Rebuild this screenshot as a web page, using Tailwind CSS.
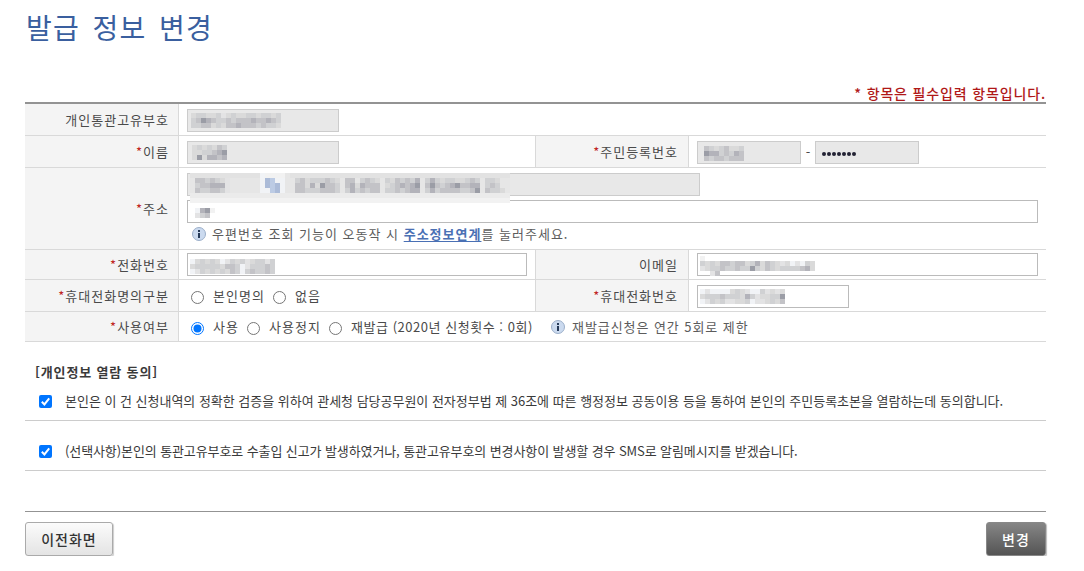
<!DOCTYPE html>
<html lang="ko">
<head>
  <meta charset="UTF-8" />
  <meta name="viewport" content="width=device-width, initial-scale=1.0"/>
  <title>발급 정보 변경</title>
  <script src="https://cdn.jsdelivr.net/npm/@tailwindcss/browser@4"></script>
</head>
<body class="bg-white text-[#4a4a4a] font-['Noto_Sans_CJK_KR',sans-serif]">
  <div class="w-[1021px] ml-[25px]">
    <header class="h-[102px] flex flex-col justify-between">
      <h1 class="mt-[7px] pl-px leading-[40px] text-[28px] tracking-[1.2px] [word-spacing:3.5px] text-[#3a5f9f] whitespace-nowrap">발급 정보 변경</h1>
      <p class="-mb-px text-right leading-[20px] text-[14px] font-medium tracking-[0.85px] text-[#b01818]">* 항목은 필수입력 항목입니다.</p>
    </header>

    <main>
      <!-- form rows -->
      <div class="border-t-2 border-[#939393] text-[13px] leading-[18px] tracking-[1px]">
        <div class="flex h-8 border-b border-[#d9d9d9]">
          <div class="w-[154px] flex items-center justify-end pr-[9px] bg-[#f4f4f4] border-r border-[#d9d9d9]">개인통관고유부호</div>
          <div class="flex-1 flex items-center pl-2 pt-px">
            <div class="relative w-[152px] h-[23px] bg-[#e8e8e8] border border-[#ccc]">
              <svg class="mosaic absolute left-[3px] top-[3px]" data-rows="eddeedfedeeddedded|dcabcddcdcccbccbcd|ddccedeccbcccdcdde"></svg>
            </div>
          </div>
        </div>

        <div class="flex h-8 border-b border-[#d9d9d9]">
          <div class="w-[154px] flex items-center justify-end pr-[9px] bg-[#f4f4f4] border-r border-[#d9d9d9]"><span class="text-[#c01f1f]">*</span>이름</div>
          <div class="w-[356px] flex items-center pl-2 pt-px">
            <div class="relative w-[152px] h-[23px] bg-[#e8e8e8] border border-[#ccc]">
              <svg class="mosaic absolute left-1 top-[3px]" data-rows="ededecd|eeddcba|eaebbcb"></svg>
            </div>
          </div>
          <div class="w-[154px] flex items-center justify-end pr-[10px] bg-[#f4f4f4] border-x border-[#d9d9d9]"><span class="text-[#c01f1f]">*</span>주민등록번호</div>
          <div class="flex-1 flex items-center pl-2 pt-px">
            <div class="relative w-[104px] h-[23px] bg-[#e8e8e8] border border-[#ccc]">
              <svg class="mosaic absolute left-[6px] top-[4px]" data-rows="cdedceed|abbdcdbc|cdccdccc"></svg>
            </div>
            <span class="w-[14px] text-center pl-px">-</span>
            <div class="w-[104px] h-[23px] flex items-center gap-px pl-[6px] pt-1 bg-[#e8e8e8] border border-[#ccc]">
              <i class="size-1 rounded-full bg-[#222233]"></i><i class="size-1 rounded-full bg-[#222233]"></i><i class="size-1 rounded-full bg-[#222233]"></i><i class="size-1 rounded-full bg-[#222233]"></i><i class="size-1 rounded-full bg-[#222233]"></i><i class="size-1 rounded-full bg-[#222233]"></i><i class="size-1 rounded-full bg-[#222233]"></i>
            </div>
          </div>
        </div>

        <div class="flex h-[82px] border-b border-[#d9d9d9]">
          <div class="w-[154px] flex items-center justify-end pr-[9px] bg-[#f4f4f4] border-r border-[#d9d9d9]"><span class="text-[#c01f1f]">*</span>주소</div>
          <div class="flex-1 flex flex-col pl-2 pt-[5px]">
            <div class="relative z-10 w-[513px] h-[23px] bg-[#e8e8e8] border border-[#ccc]">
              <svg class="mosaic absolute left-[2px] -top-px" data-rows="hhhhhhhhhhhhhhwkkkkghhhhhhhhhhhhhhhhhhhhhhhhhhhhhhhhhhhhhhhhhhhh|gccdcdefggggggw12wwggdcedddcdegccgdcdegdecdcdbgdbdeddeedcdgddegg|gdccbbbfggggggw121wggccebeaccdgcbebcccgedcbcbagcacdcbaccbbgdcdggg|gcddccdfggggggww21wggccdddcccdgdbdcdccgddcdcbbgdbdccccddcagcddegg|jjjjjjjjjjjjjjjjjjjjjjjjjjjjjjjjjjjjjjjjjjjjjjjjjjjjjjjjjjjjjjjj|kkkkkkkkkkkkkkkkkkkkkkkkkkkkkkkkkkkkkkkkkkkkkkkkkkkkkkkkkkkkkkkk"></svg>
            </div>
            <div class="relative mt-1 w-[851px] h-[23px] border border-[#bbb]">
              <svg class="mosaic absolute left-[2px] top-[7px]" data-rows=".wbak|.fdc."></svg>
            </div>
            <div class="flex items-center mt-[3px] pl-[5px] text-[#5c5c5c]">
              <svg class="w-[14px] h-[14px] mr-[6px] -mt-px" viewBox="0 0 14 14"><circle cx="7" cy="7" r="6.5" fill="#cbdaef" stroke="#9cafc9"/><path d="M6 3h2v2H6zM6 6h2v5H6z" fill="#263a58"/></svg>
              <span class="-mt-px">우편번호 조회 기능이 오동작 시 <a class="font-bold text-[#4a70b4] underline underline-offset-2">주소정보연계</a>를 눌러주세요.</span>
            </div>
          </div>
        </div>

        <div class="flex h-[30px] border-b border-[#d9d9d9]">
          <div class="w-[154px] flex items-center justify-end pr-[9px] bg-[#f4f4f4] border-r border-[#d9d9d9]"><span class="text-[#c01f1f]">*</span>전화번호</div>
          <div class="w-[356px] flex items-center pl-2">
            <div class="relative w-[340px] h-[23px] border border-[#bbb]">
              <svg class="mosaic absolute left-[2px] top-[5px]" data-rows="wededewfdedfeddfd.|edddddeccdwfdddcd.|wfdededecdwdcddcd."></svg>
            </div>
          </div>
          <div class="w-[154px] flex items-center justify-end pr-[10px] bg-[#f4f4f4] border-x border-[#d9d9d9]">이메일</div>
          <div class="flex-1 flex items-center pl-2">
            <div class="relative w-[341px] h-[23px] border border-[#bbb]">
              <svg class="mosaic absolute left-[2px] top-[2px]" data-rows="k......................|dedeccdccedbecdefewfwde|feddcddcddadecdeddddcbe|..fc..................."></svg>
            </div>
          </div>
        </div>

        <div class="flex h-8 border-b border-[#d9d9d9]">
          <div class="w-[154px] flex items-center justify-end pr-[9px] bg-[#f4f4f4] border-r border-[#d9d9d9]"><span class="text-[#c01f1f]">*</span>휴대전화명의구분</div>
          <div class="w-[356px] flex items-center pl-3">
            <svg class="w-[13px] h-[13px] mr-[9px] mt-[3px]" viewBox="0 0 13 13"><circle cx="6.5" cy="6.5" r="6" fill="#fff" stroke="#767676"/></svg>
            <span class="w-[60px]">본인명의</span>
            <svg class="w-[13px] h-[13px] mr-[9px] mt-[3px]" viewBox="0 0 13 13"><circle cx="6.5" cy="6.5" r="6" fill="#fff" stroke="#767676"/></svg>
            <span>없음</span>
          </div>
          <div class="w-[154px] flex items-center justify-end pr-[10px] bg-[#f4f4f4] border-x border-[#d9d9d9]"><span class="text-[#c01f1f]">*</span>휴대전화번호</div>
          <div class="flex-1 flex items-center pl-2 pt-px">
            <div class="relative w-[152px] h-[23px] border border-[#bbb]">
              <svg class="mosaic absolute left-[2px] top-[3px]" data-rows="wfwwwwedefwwdfefe|edddcdddebdfeedda|wfdedffeedwffedec"></svg>
            </div>
          </div>
        </div>

        <div class="flex h-[30px] border-b border-[#d9d9d9]">
          <div class="w-[154px] flex items-center justify-end pr-[9px] bg-[#f4f4f4] border-r border-[#d9d9d9]"><span class="text-[#c01f1f]">*</span>사용여부</div>
          <div class="flex-1 flex items-center pl-3">
            <svg class="w-[13px] h-[13px] mr-[9px] mt-[3px]" viewBox="0 0 13 13"><circle cx="6.5" cy="6.5" r="6" fill="#fff" stroke="#0075ff"/><circle cx="6.5" cy="6.5" r="4" fill="#0075ff"/></svg>
            <span class="w-[34px]">사용</span>
            <svg class="w-[13px] h-[13px] mr-[9px] mt-[3px]" viewBox="0 0 13 13"><circle cx="6.5" cy="6.5" r="6" fill="#fff" stroke="#767676"/></svg>
            <span class="w-[60px]">사용정지</span>
            <svg class="w-[13px] h-[13px] mr-[9px] mt-[3px]" viewBox="0 0 13 13"><circle cx="6.5" cy="6.5" r="6" fill="#fff" stroke="#767676"/></svg>
            <span class="w-[200px] whitespace-nowrap tracking-[0.53px]">재발급 (2020년 신청횟수 : 0회)</span>
            <svg class="w-[14px] h-[14px] mr-[7px] mt-px" viewBox="0 0 14 14"><circle cx="7" cy="7" r="6.5" fill="#cbdaef" stroke="#9cafc9"/><path d="M6 3h2v2H6zM6 6h2v5H6z" fill="#263a58"/></svg>
            <span class="text-[#5c5c5c] tracking-[0.93px]">재발급신청은 연간 5회로 제한</span>
          </div>
        </div>
      </div>

      <!-- consent -->
      <section class="text-[13px] leading-[18px] text-[#3a3a3a]">
        <h2 class="pt-[21px] pl-[10px] font-bold tracking-[0.85px]">[개인정보 열람 동의]</h2>
        <div class="flex items-center h-[40px] pl-[14px] border-b border-[#ccc]">
          <svg class="w-[13px] h-[13px] mr-[13px] mt-px" viewBox="0 0 13 13"><rect width="13" height="13" rx="2" fill="#0075ff"/><path d="M2.8 6.8l2.6 2.6 4.8-6" fill="none" stroke="#fff" stroke-width="2"/></svg>
          <span class="whitespace-nowrap tracking-[-0.02px]">본인은 이 건 신청내역의 정확한 검증을 위하여 관세청 담당공무원이 전자정부법 제 36조에 따른 행정정보 공동이용 등을 통하여 본인의 주민등록초본을 열람하는데 동의합니다.</span>
        </div>
        <div class="flex items-center h-[50px] pl-[14px] pt-[10px] border-b border-[#ccc]">
          <svg class="w-[13px] h-[13px] mr-[13px] mt-px" viewBox="0 0 13 13"><rect width="13" height="13" rx="2" fill="#0075ff"/><path d="M2.8 6.8l2.6 2.6 4.8-6" fill="none" stroke="#fff" stroke-width="2"/></svg>
          <span class="whitespace-nowrap tracking-[-0.1px]">(선택사항)본인의 통관고유부호로 수출입 신고가 발생하였거나, 통관고유부호의 변경사항이 발생할 경우 SMS로 알림메시지를 받겠습니다.</span>
        </div>
      </section>
    </main>

    <footer class="mt-10 pt-[10px] flex justify-between border-t border-[#939393] text-[14px] font-medium tracking-[1px]">
      <button class="w-[88px] h-[34px] rounded-[3px] border border-[#aaa] bg-linear-to-b from-[#fbfbfb] to-[#e4e4e4] shadow-[1px_1px_1px_#ccc] text-[#333]">이전화면</button>
      <button class="w-[60px] h-[34px] rounded-[3px] border border-[#888] bg-linear-to-b from-[#868686] to-[#555] shadow-[1px_1px_1px_#bbb] text-white">변경</button>
    </footer>
  </div>

  <script>
    // masked values, one letter per 5px cell
    const shades = {
      a: "#9b9da6", b: "#b3b3ba", c: "#c3c3c7", d: "#d0d1d3", e: "#dadada", f: "#e3e3e4",
      g: "#e6e6e6", h: "#e2e2e2", j: "#ebebeb", k: "#f2f2f2", w: "#f1f3f6", 1: "#abbbd8", 2: "#bccbe4"
    };

    document.querySelectorAll(".mosaic").forEach(svg => {
      const rows = svg.dataset.rows.split("|");
      const cols = rows[rows.length - 1].length;
      svg.setAttribute("width", cols * 5);
      svg.setAttribute("height", rows.length * 5);
      svg.setAttribute("shape-rendering", "crispEdges");
      svg.innerHTML = rows.map((row, y) => [...row].map((c, x) =>
        shades[c] ? `<rect x="${x * 5}" y="${y * 5}" width="5" height="5" fill="${shades[c]}"/>` : ""
      ).join("")).join("");
    });
  </script>
</body>
</html>
